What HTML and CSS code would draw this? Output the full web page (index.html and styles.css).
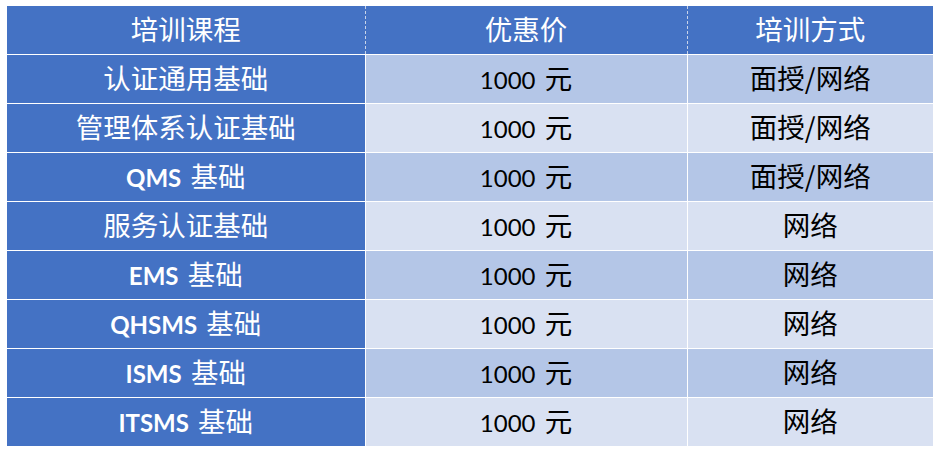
FILE: index.html
```html
<!DOCTYPE html>
<html lang="zh-CN">
<head>
<meta charset="utf-8">
<title>培训课程</title>
<link rel="stylesheet" href="styles.css">
</head>
<body>
<table class="course-table">
  <colgroup>
    <col class="c1"><col class="c2"><col class="c3">
  </colgroup>
  <thead>
    <tr><th>培训课程</th><th>优惠价</th><th>培训方式</th></tr>
  </thead>
  <tbody>
    <tr><td class="name">认证通用基础</td><td><span class="lat">1000</span> 元</td><td>面授/网络</td></tr>
    <tr><td class="name">管理体系认证基础</td><td><span class="lat">1000</span> 元</td><td>面授/网络</td></tr>
    <tr><td class="name"><span class="latb">QMS</span> 基础</td><td><span class="lat">1000</span> 元</td><td>面授/网络</td></tr>
    <tr><td class="name">服务认证基础</td><td><span class="lat">1000</span> 元</td><td>网络</td></tr>
    <tr><td class="name"><span class="latb">EMS</span> 基础</td><td><span class="lat">1000</span> 元</td><td>网络</td></tr>
    <tr><td class="name"><span class="latb">QHSMS</span> 基础</td><td><span class="lat">1000</span> 元</td><td>网络</td></tr>
    <tr><td class="name"><span class="latb">ISMS</span> 基础</td><td><span class="lat">1000</span> 元</td><td>网络</td></tr>
    <tr><td class="name"><span class="latb">ITSMS</span> 基础</td><td><span class="lat">1000</span> 元</td><td>网络</td></tr>
  </tbody>
</table>
</body>
</html>
```
FILE: styles.css
```css
html, body {
  margin: 0;
  padding: 0;
  background: #ffffff;
}
body {
  padding: 6px 0 0 7px;
}
.course-table {
  border-collapse: collapse;
  table-layout: fixed;
  width: 926px;
  font-family: "Noto Sans CJK SC", "Noto Sans", sans-serif;
  font-size: 27.5px;
  color: #000;
}
.c1 { width: 358px; }
.c2 { width: 322px; }
.c3 { width: 246px; }
.course-table th,
.course-table td {
  height: 46px;
  padding: 0 0 2px 0;
  text-align: center;
  vertical-align: middle;
  line-height: 1;
  font-weight: 400;
  border: 1px solid #ffffff;
}
.course-table tr:first-child th,
.course-table tr:first-child td { border-top: none; }
.course-table tbody tr:last-child td { border-bottom: none; }
.course-table th:first-child,
.course-table td:first-child { border-left: none; }
.course-table th:last-child,
.course-table td:last-child { border-right: none; }
.course-table thead th {
  background: #4472c4;
  color: #ffffff;
  border-left: 1px dashed #c9d4ea;
  border-right: 1px dashed #c9d4ea;
  border-bottom: 1px solid #ffffff;
}
.course-table thead th:first-child { border-left: none; }
.course-table thead th:last-child { border-right: none; }
.course-table tbody tr:nth-child(odd) td { background: #b4c6e7; }
.course-table tbody tr:nth-child(even) td { background: #d9e1f2; }
.course-table tbody td.name {
  background: #4472c4 !important;
  color: #ffffff;
}
.lat {
  font-family: "Lato", "Liberation Sans", sans-serif;
  font-size: 24px;
  margin-right: 3px;
}
.latb {
  font-family: "Lato", "Liberation Sans", sans-serif;
  font-size: 24px;
  font-weight: 700;
  margin-right: 3px;
}
```
